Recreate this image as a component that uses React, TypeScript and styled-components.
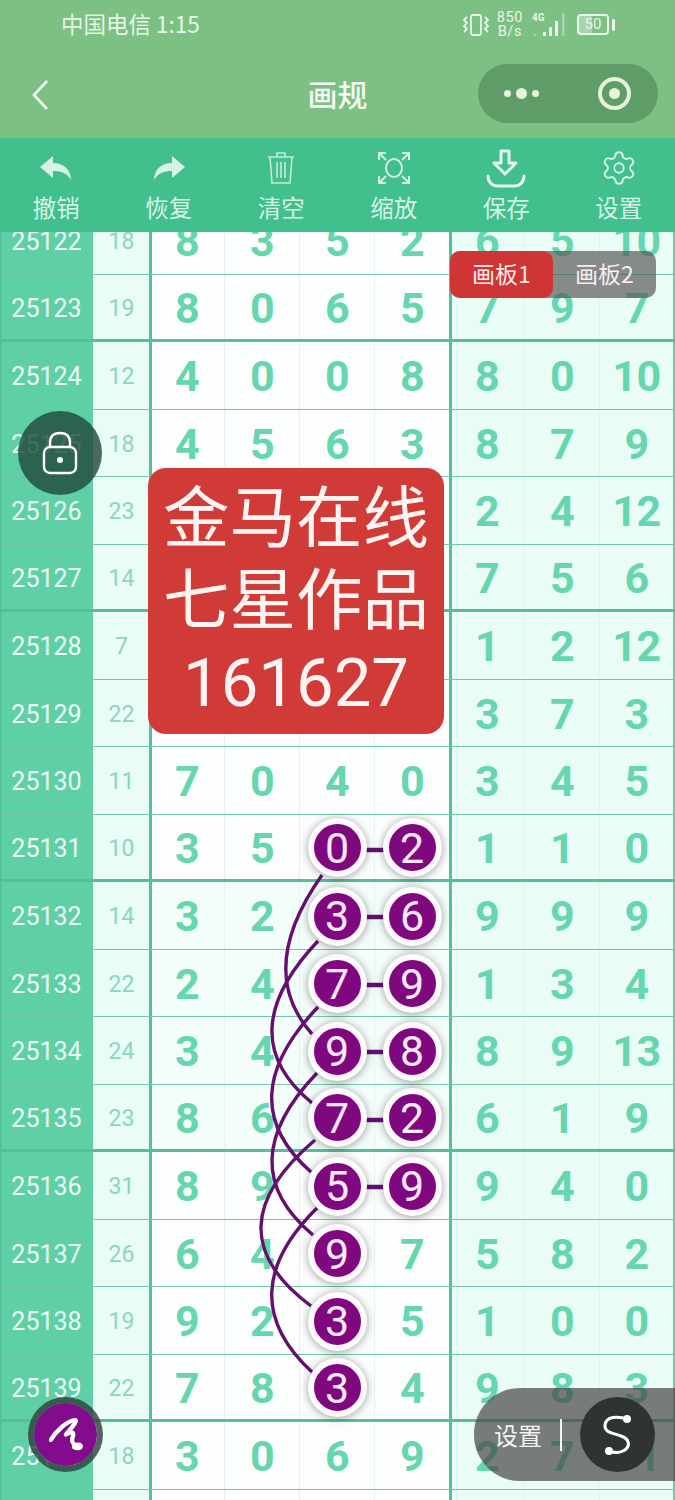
import * as React from 'react';
import styled, { createGlobalStyle } from 'styled-components';
import { Settings } from 'lucide-react';

const CJK = `"Noto Sans CJK SC", "Noto Sans", sans-serif`;
const NUM = `Roboto, "Noto Sans CJK SC", sans-serif`;

const GlobalStyle = createGlobalStyle`
	html, body {
		margin: 0;
		padding: 0;
		background: #7cc084;
	}
	* {
		box-sizing: border-box;
	}
`;

interface IRow {
	id: string,
	sum: string,
	left: string[],
	right: string[],
	balls?: number[],
}

const row = (id: number, sum: string, left: string, right: string, balls?: number[]): IRow => ({
	id: String(id),
	sum,
	left: left ? left.split(' ') : ['', '', '', ''],
	right: right ? right.split(' ') : ['', '', ''],
	balls,
});

const rows: IRow[] = [
	row(25122, '18', '8 3 5 2', '6 5 10'),
	row(25123, '19', '8 0 6 5', '7 9 7'),
	row(25124, '12', '4 0 0 8', '8 0 10'),
	row(25125, '18', '4 5 6 3', '8 7 9'),
	row(25126, '23', '', '2 4 12'),
	row(25127, '14', '', '7 5 6'),
	row(25128, '7', '', '1 2 12'),
	row(25129, '22', '', '3 7 3'),
	row(25130, '11', '7 0 4 0', '3 4 5'),
	row(25131, '10', '3 5 0 2', '1 1 0', [2, 3]),
	row(25132, '14', '3 2 3 6', '9 9 9', [2, 3]),
	row(25133, '22', '2 4 7 9', '1 3 4', [2, 3]),
	row(25134, '24', '3 4 9 8', '8 9 13', [2, 3]),
	row(25135, '23', '8 6 7 2', '6 1 9', [2, 3]),
	row(25136, '31', '8 9 5 9', '9 4 0', [2, 3]),
	row(25137, '26', '6 4 9 7', '5 8 2', [2]),
	row(25138, '19', '9 2 3 5', '1 0 0', [2]),
	row(25139, '22', '7 8 3 4', '9 8 3', [2]),
	row(25140, '18', '3 0 6 9', '2 7 11'),
];

const curves = [
	'M322 875 Q255 970 312 1034',
	'M318 941 Q229 1035 312 1103',
	'M318 1007 Q229 1100 311 1172',
	'M317 1073 Q229 1165 313 1235',
	'M315 1140 Q209 1230 311 1306',
	'M317 1208 Q229 1295 312 1372',
];

const links = [850, 917, 985, 1052, 1120, 1187];

const Page = styled.div`
	position: relative;
	width: 675px;
	height: 1500px;
	overflow: hidden;
	display: flex;
	flex-direction: column;
	font-family: ${CJK};
	background: #fff;
`;

const StatusBar = styled.div`
	height: 52px;
	flex-shrink: 0;
	background: #7cc084;
	display: flex;
	align-items: center;
	justify-content: space-between;
	padding: 0 60px 3px 61px;
	color: #e8f5e9;
`;

const Carrier = styled.div`
	font-size: 22.5px;
	margin-bottom: 4px;
`;

const StatusIcons = styled.div`
	display: flex;
	align-items: center;
	gap: 8px;
`;

const Speed = styled.div`
	font-family: ${NUM};
	font-size: 14.5px;
	line-height: 14px;
	text-align: center;
	letter-spacing: 0.6px;
`;

const Signal = styled.div`
	position: relative;
	width: 34px;
	height: 26px;
	margin-left: 1px;
`;

const NetLabel = styled.span`
	position: absolute;
	left: 0;
	top: 0;
	font-family: ${NUM};
	font-size: 10px;
	font-weight: 700;
	line-height: 12px;
`;

const Battery = styled.div`
	width: 32px;
	height: 21px;
	margin-left: 3px;
	border: 2px solid #e8f5e9;
	border-radius: 4px;
	font-family: ${NUM};
	font-size: 15px;
	line-height: 17px;
	text-align: center;
	background: linear-gradient(90deg, #a9d4ae 0 45%, transparent 45%);
`;

const BatteryCap = styled.div`
	width: 3px;
	height: 12px;
	margin-left: -5px;
	border-radius: 2px;
	background: #e8f5e9;
`;

const NavBar = styled.div`
	position: relative;
	height: 86px;
	flex-shrink: 0;
	background: #7cc084;
	display: flex;
	align-items: center;
	justify-content: center;
	padding-bottom: 5px;
`;

const BackButton = styled.svg`
	position: absolute;
	left: 31px;
	top: 27px;
`;

const Title = styled.div`
	font-size: 30px;
	font-weight: 500;
	color: #f3f9f3;
`;

const Capsule = styled.div`
	position: absolute;
	left: 478px;
	top: 12px;
	width: 180px;
	height: 59px;
	border-radius: 30px;
	background: #5f9d68;
	display: flex;
	align-items: center;
	justify-content: space-between;
	padding: 0 27px 0 26px;
`;

const Dots = styled.div`
	display: flex;
	align-items: center;
	gap: 5px;
`;

const Dot = styled.span<{ $size: number }>`
	width: ${p => p.$size}px;
	height: ${p => p.$size}px;
	border-radius: 50%;
	background: #e6f2dc;
`;

const Target = styled.div`
	width: 33px;
	height: 33px;
	border: 4px solid #e6f2dc;
	border-radius: 50%;
	display: flex;
	align-items: center;
	justify-content: center;
`;

const TargetCore = styled.span`
	width: 11px;
	height: 11px;
	border-radius: 50%;
	background: #e6f2dc;
`;

const Toolbar = styled.div`
	height: 94px;
	flex-shrink: 0;
	background: #41bf8d;
	display: grid;
	grid-template-columns: repeat(6, 1fr);
	padding-top: 10px;
`;

const ToolItem = styled.div`
	display: flex;
	flex-direction: column;
	align-items: center;
	color: #d6f3e7;
`;

const ToolIcon = styled.div`
	height: 40px;
	display: flex;
	align-items: center;
	justify-content: center;
`;

const ToolLabel = styled.div`
	font-size: 23.5px;
	line-height: 34px;
	margin-top: 2px;
`;

const Board = styled.div`
	flex: 1;
	min-height: 0;
	overflow: hidden;
`;

const Grid = styled.div`
	margin-top: -25px;
`;

const Row = styled.div<{ $thick: boolean }>`
	display: grid;
	grid-template-columns: 93px 57px repeat(7, 75px);
	height: 67.5px;
	border-bottom: ${p => (p.$thick ? '3px solid #55bf99' : '1.5px solid #72c7a8')};
`;

const IdCell = styled.div`
	display: flex;
	align-items: center;
	justify-content: center;
	padding-top: 3px;
	background: #5fd0a6;
	box-shadow: inset 1.5px 0 0 #52bf98;
	font-family: ${NUM};
	font-size: 25px;
	color: #ecfbf5;
`;

const SumCell = styled.div`
	display: flex;
	align-items: center;
	justify-content: center;
	padding-top: 3px;
	background: #e9fcf6;
	font-family: ${NUM};
	font-size: 23px;
	color: #8cd6bb;
`;

const NumCell = styled.div<{ $mint?: boolean, $rule?: boolean, $tint?: boolean, $end?: boolean }>`
	display: flex;
	align-items: center;
	justify-content: center;
	padding-top: 2px;
	background: ${p => (p.$mint ? '#e9fcf6' : p.$tint ? '#f3fdf9' : '#fbfefd')};
	border-right: ${p => (p.$end ? '2px solid #6cc9a9' : '1.5px solid #e7f2ee')};
	box-shadow: ${p => (p.$rule ? '-1px 0 0 #55bf99, inset 2px 0 0 #55bf99' : 'none')};
	font-family: ${NUM};
	font-size: 43px;
	font-weight: 700;
	letter-spacing: -0.5px;
	color: #66d6ae;
`;

const Ball = styled.div`
	position: relative;
	z-index: 2;
	width: 59px;
	height: 59px;
	border-radius: 50%;
	border: 6px solid #fdf9fc;
	background: #80087f;
	box-shadow: 0 1px 9px rgba(0, 0, 0, 0.38);
	display: flex;
	align-items: center;
	justify-content: center;
	font-size: 43px;
	font-weight: 400;
	letter-spacing: 0;
	color: #f9e9f9;
`;

const Strokes = styled.svg`
	position: absolute;
	left: 0;
	top: 0;
	z-index: 1;
	pointer-events: none;
`;

const Tabs = styled.div`
	position: absolute;
	left: 450px;
	top: 251px;
	z-index: 3;
	display: flex;
	width: 206px;
	height: 47px;
	border-radius: 10px;
	background: rgba(85, 85, 85, 0.68);
`;

const Tab = styled.div<{ $active?: boolean }>`
	flex: 1;
	display: flex;
	align-items: center;
	justify-content: center;
	padding-bottom: 4px;
	border-radius: 10px;
	background: ${p => (p.$active ? '#cf3535' : 'transparent')};
	font-size: 23px;
	color: #fbecec;
`;

const Notice = styled.div`
	position: absolute;
	left: 148px;
	top: 468px;
	z-index: 3;
	width: 296px;
	height: 266px;
	padding-bottom: 6px;
	border-radius: 18px;
	background: #d03a37;
	display: flex;
	flex-direction: column;
	align-items: center;
	justify-content: center;
	color: #fdf3f1;
	font-size: 66.5px;
	line-height: 82px;
	white-space: nowrap;
`;

const NoticeCode = styled.div`
	margin-top: 6px;
	font-family: ${NUM};
	font-size: 67px;
`;

const LockButton = styled.div`
	position: absolute;
	left: 18px;
	top: 411px;
	z-index: 3;
	width: 84px;
	height: 84px;
	border-radius: 50%;
	background: rgba(30, 70, 60, 0.8);
	display: flex;
	align-items: center;
	justify-content: center;
`;

const PenButton = styled.div`
	position: absolute;
	left: 28px;
	top: 1397px;
	z-index: 3;
	width: 75px;
	height: 75px;
	border-radius: 50%;
	border: 6px solid rgba(45, 60, 60, 0.8);
	background: #820c8c;
	background-clip: padding-box;
	display: flex;
	align-items: center;
	justify-content: center;
`;

const SettingsPill = styled.div`
	position: absolute;
	left: 474px;
	top: 1388px;
	z-index: 3;
	width: 201px;
	height: 93px;
	border-radius: 46px 0 0 46px;
	background: rgba(70, 70, 70, 0.7);
	display: flex;
	align-items: center;
	padding-left: 20px;
	color: #f3f3f3;
	font-size: 24px;
`;

const PillRule = styled.span`
	width: 1.5px;
	height: 32px;
	margin-left: 18px;
	background: #f3f3f3;
`;

const PillKnob = styled.div`
	width: 75px;
	height: 75px;
	margin-left: 18px;
	border-radius: 50%;
	background: #2f3332;
	display: flex;
	align-items: center;
	justify-content: center;
`;

const ArrowIcon = ({ flip }: { flip?: boolean }) => (
	<svg width="32" height="25" viewBox="0 0 32 25" style={flip ? { transform: 'scaleX(-1)' } : undefined}>
		<path d="M0 11 L13 0 V7 C24 7 31 14 31 24 C27 17 21 15 13 15 V22 Z" fill="#d6f3e7" />
	</svg>
);

const TrashIcon = () => (
	<svg width="28" height="34" viewBox="0 0 28 34" fill="none" stroke="#c4ecdb" strokeWidth="1.6">
		<path d="M1 6 H27 M10 6 V2 H18 V6 M3 6 L5 32 H23 L25 6 M10 11 V27 M14 11 V27 M18 11 V27" />
	</svg>
);

const ScanIcon = () => (
	<svg width="32" height="32" viewBox="0 0 32 32" fill="none" stroke="#d6f3e7" strokeWidth="2">
		<ellipse cx="16" cy="16" rx="8" ry="9" />
		<path d="M1 8 V1 H8 M1 1 L8 8 M24 1 H31 V8 M31 1 L24 8 M1 24 V31 H8 M1 31 L8 24 M24 31 H31 V24 M31 31 L24 24" />
	</svg>
);

const SaveIcon = () => (
	<svg width="40" height="39" viewBox="0 0 40 39" fill="none" stroke="#e4f8ef" strokeWidth="3" strokeLinejoin="round" strokeLinecap="round">
		<path d="M15 2 H23 V14 H30 L19 25 L8 14 H15 Z" />
		<path d="M2 27 C2 33 6 37 12 37 H28 C34 37 38 33 38 27" />
	</svg>
);

const StatusGlyphs = {
	vibrate: (
		<svg width="26" height="24" viewBox="0 0 26 24" fill="none" stroke="#e8f5e9" strokeWidth="1.8">
			<rect x="8" y="2" width="10" height="20" rx="2" />
			<path d="M4 4 L1 7 L4 10 L1 13 L4 16 L1 19 M22 4 L25 7 L22 10 L25 13 L22 16 L25 19" />
		</svg>
	),
	bars: (
		<svg width="34" height="26" viewBox="0 0 34 26">
			<rect x="2" y="22" width="2" height="2" fill="#a9d4ae" />
			<rect x="11" y="20" width="3" height="4" fill="#e8f5e9" />
			<rect x="17" y="15" width="3" height="9" fill="#e8f5e9" />
			<rect x="23" y="9" width="3" height="15" fill="#e8f5e9" />
			<rect x="30" y="1" width="2.5" height="23" fill="#a9d4ae" />
		</svg>
	),
};

export default function App() {
	return (
		<Page>
			<GlobalStyle />
			<StatusBar>
				<Carrier>中国电信 1:15</Carrier>
				<StatusIcons>
					{StatusGlyphs.vibrate}
					<Speed>850<br />B/s</Speed>
					<Signal>
						<NetLabel>4G</NetLabel>
						{StatusGlyphs.bars}
					</Signal>
					<Battery>50</Battery>
					<BatteryCap />
				</StatusIcons>
			</StatusBar>

			<NavBar>
				<BackButton width="18" height="32" viewBox="0 0 18 32" fill="none" stroke="#f3f9f3" strokeWidth="2.6">
					<path d="M16 2 L3 16 L16 30" />
				</BackButton>
				<Title>画规</Title>
				<Capsule>
					<Dots>
						<Dot $size={7} />
						<Dot $size={11} />
						<Dot $size={7} />
					</Dots>
					<Target><TargetCore /></Target>
				</Capsule>
			</NavBar>

			<Toolbar>
				<ToolItem><ToolIcon><ArrowIcon /></ToolIcon><ToolLabel>撤销</ToolLabel></ToolItem>
				<ToolItem><ToolIcon><ArrowIcon flip /></ToolIcon><ToolLabel>恢复</ToolLabel></ToolItem>
				<ToolItem><ToolIcon><TrashIcon /></ToolIcon><ToolLabel>清空</ToolLabel></ToolItem>
				<ToolItem><ToolIcon><ScanIcon /></ToolIcon><ToolLabel>缩放</ToolLabel></ToolItem>
				<ToolItem><ToolIcon><SaveIcon /></ToolIcon><ToolLabel>保存</ToolLabel></ToolItem>
				<ToolItem><ToolIcon><Settings size={38} strokeWidth={1.2} color="#d6f3e7" /></ToolIcon><ToolLabel>设置</ToolLabel></ToolItem>
			</Toolbar>

			<Board>
				<Grid>
					{rows.map((r, i) => {
						const tint = i >= 10 && i <= 13;
						return (
							<Row key={r.id} $thick={(i - 1) % 4 === 0}>
								<IdCell>{r.id}</IdCell>
								<SumCell>{r.sum}</SumCell>
								{r.left.map((v, c) => (
									<NumCell key={c} $rule={c === 0} $tint={tint}>
										{r.balls && r.balls.includes(c) ? <Ball>{v}</Ball> : v}
									</NumCell>
								))}
								{r.right.map((v, c) => (
									<NumCell key={c} $mint $rule={c === 0} $end={c === 2}>{v}</NumCell>
								))}
							</Row>
						);
					})}
					<Row $thick={false}>
						<IdCell />
						<SumCell />
						{[0, 1, 2, 3].map(c => <NumCell key={c} $rule={c === 0} />)}
						{[0, 1, 2].map(c => <NumCell key={c} $mint $rule={c === 0} $end={c === 2} />)}
					</Row>
				</Grid>
			</Board>

			<Strokes width="675" height="1500" viewBox="0 0 675 1500" fill="none" stroke="#651070" strokeWidth="3.4">
				{curves.map(d => <path key={d} d={d} />)}
				{links.map(y => <path key={y} d={`M366 ${y} H384`} strokeWidth="4.5" />)}
			</Strokes>

			<Tabs>
				<Tab $active>画板1</Tab>
				<Tab>画板2</Tab>
			</Tabs>

			<Notice>
				<div>金马在线</div>
				<div>七星作品</div>
				<NoticeCode>161627</NoticeCode>
			</Notice>

			<LockButton>
				<svg width="36" height="44" viewBox="0 0 36 44" fill="none" stroke="#fff" strokeWidth="2.4">
					<rect x="2" y="16" width="32" height="26" rx="6" />
					<path d="M8 16 V12 C8 5 12 2 18 2 C24 2 28 5 28 12 V16" />
					<circle cx="18" cy="29" r="3" fill="#fff" stroke="none" />
				</svg>
			</LockButton>

			<PenButton>
				<svg width="34" height="33" viewBox="0 0 38 36" fill="none" stroke="#fff" strokeWidth="4.8" strokeLinecap="round" strokeLinejoin="round">
					<path d="M2 24 C8 14 20 3 29 2 C33 2 24 12 19 18 C23 15 28 14 27 19 C26 23 24 26 28 29 C31 31 33 28 35 30 C37 33 32 34 28 32" />
				</svg>
			</PenButton>

			<SettingsPill>
				设置
				<PillRule />
				<PillKnob>
					<svg width="34" height="44" viewBox="0 0 34 44" fill="none" stroke="#fff" strokeWidth="3">
						<path d="M27 6 C18 3 6 3 5 12 C4 20 14 20 21 23 C30 26 31 34 23 38 C19 40 14 40 9 38" />
						<circle cx="27" cy="6" r="4" fill="#fff" stroke="none" />
						<circle cx="9" cy="38" r="4" fill="#fff" stroke="none" />
					</svg>
				</PillKnob>
			</SettingsPill>
		</Page>
	);
}
